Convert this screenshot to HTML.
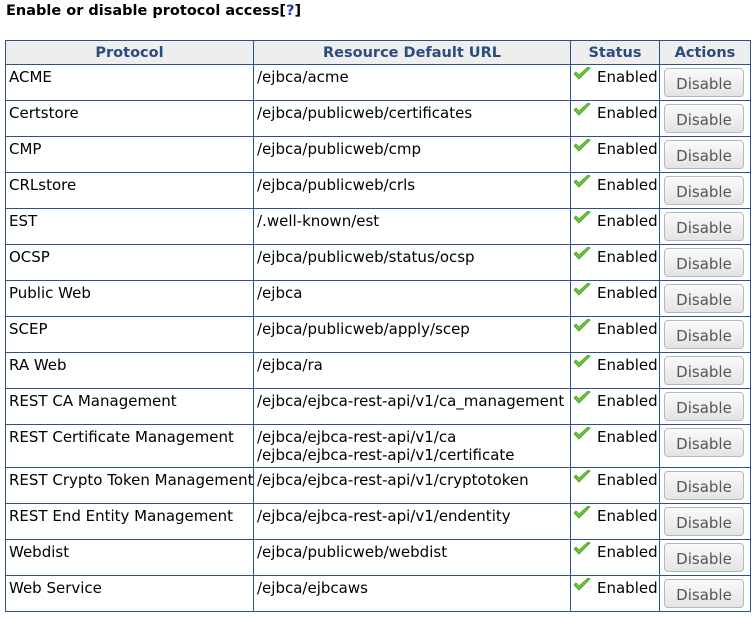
<!DOCTYPE html>
<html><head><meta charset="utf-8"><style>
body{margin:0;background:#fff;font-family:"DejaVu Sans",Verdana,sans-serif;font-size:15px;color:#000;}
h3{position:absolute;left:6px;top:3px;margin:0;font-size:14.5px;font-weight:bold;}
h3 a{color:#1a3aa0;text-decoration:none;}
table{position:absolute;left:5px;top:40px;border-collapse:collapse;table-layout:fixed;width:745px;}
td,th{border:1px solid #2f5089;padding:0 0 0 3px;vertical-align:top;overflow:hidden;white-space:nowrap;line-height:18px;}
th{background:#eeeeee;color:#2b4b7e;font-weight:bold;height:20px;padding:3px 0 0 0;text-align:center;font-size:14.5px;}
td{height:32px;padding-top:3px;}
td.s{padding-left:2px;}
.chk{display:inline-block;width:18px;height:14px;vertical-align:top;margin-top:-1px;margin-right:6px;}
.btn{display:block;margin:3px 0 0 3px;width:80px;height:29px;box-sizing:border-box;border:1px solid #b8b8b8;border-radius:4px;background:linear-gradient(#fafafa,#e4e4e4);color:#555;text-align:center;line-height:30px;font-size:15px;}
td.a{padding:0 0 0 1px;}
tr.tall td{height:39px;}
</style></head><body>
<h3>Enable or disable protocol access[<a>?</a>]</h3>
<table>
<colgroup><col style="width:248px"><col style="width:317px"><col style="width:89px"><col style="width:91px"></colgroup>
<tr><th>Protocol</th><th>Resource Default URL</th><th>Status</th><th>Actions</th></tr>
<tr><td>ACME</td><td>/ejbca/acme</td><td class="s"><svg class="chk" viewBox="0 0 18 14"><path d="M1 7 L6 12 L17 1 L15 0 L6 8 L3 5 Z" fill="#6cc83a" stroke="#4a9a26" stroke-width="0.8"/></svg>Enabled</td><td class="a"><span class="btn">Disable</span></td></tr>
<tr><td>Certstore</td><td>/ejbca/publicweb/certificates</td><td class="s"><svg class="chk" viewBox="0 0 18 14"><path d="M1 7 L6 12 L17 1 L15 0 L6 8 L3 5 Z" fill="#6cc83a" stroke="#4a9a26" stroke-width="0.8"/></svg>Enabled</td><td class="a"><span class="btn">Disable</span></td></tr>
<tr><td>CMP</td><td>/ejbca/publicweb/cmp</td><td class="s"><svg class="chk" viewBox="0 0 18 14"><path d="M1 7 L6 12 L17 1 L15 0 L6 8 L3 5 Z" fill="#6cc83a" stroke="#4a9a26" stroke-width="0.8"/></svg>Enabled</td><td class="a"><span class="btn">Disable</span></td></tr>
<tr><td>CRLstore</td><td>/ejbca/publicweb/crls</td><td class="s"><svg class="chk" viewBox="0 0 18 14"><path d="M1 7 L6 12 L17 1 L15 0 L6 8 L3 5 Z" fill="#6cc83a" stroke="#4a9a26" stroke-width="0.8"/></svg>Enabled</td><td class="a"><span class="btn">Disable</span></td></tr>
<tr><td>EST</td><td>/.well-known/est</td><td class="s"><svg class="chk" viewBox="0 0 18 14"><path d="M1 7 L6 12 L17 1 L15 0 L6 8 L3 5 Z" fill="#6cc83a" stroke="#4a9a26" stroke-width="0.8"/></svg>Enabled</td><td class="a"><span class="btn">Disable</span></td></tr>
<tr><td>OCSP</td><td>/ejbca/publicweb/status/ocsp</td><td class="s"><svg class="chk" viewBox="0 0 18 14"><path d="M1 7 L6 12 L17 1 L15 0 L6 8 L3 5 Z" fill="#6cc83a" stroke="#4a9a26" stroke-width="0.8"/></svg>Enabled</td><td class="a"><span class="btn">Disable</span></td></tr>
<tr><td>Public Web</td><td>/ejbca</td><td class="s"><svg class="chk" viewBox="0 0 18 14"><path d="M1 7 L6 12 L17 1 L15 0 L6 8 L3 5 Z" fill="#6cc83a" stroke="#4a9a26" stroke-width="0.8"/></svg>Enabled</td><td class="a"><span class="btn">Disable</span></td></tr>
<tr><td>SCEP</td><td>/ejbca/publicweb/apply/scep</td><td class="s"><svg class="chk" viewBox="0 0 18 14"><path d="M1 7 L6 12 L17 1 L15 0 L6 8 L3 5 Z" fill="#6cc83a" stroke="#4a9a26" stroke-width="0.8"/></svg>Enabled</td><td class="a"><span class="btn">Disable</span></td></tr>
<tr><td>RA Web</td><td>/ejbca/ra</td><td class="s"><svg class="chk" viewBox="0 0 18 14"><path d="M1 7 L6 12 L17 1 L15 0 L6 8 L3 5 Z" fill="#6cc83a" stroke="#4a9a26" stroke-width="0.8"/></svg>Enabled</td><td class="a"><span class="btn">Disable</span></td></tr>
<tr><td>REST CA Management</td><td>/ejbca/ejbca-rest-api/v1/ca_management</td><td class="s"><svg class="chk" viewBox="0 0 18 14"><path d="M1 7 L6 12 L17 1 L15 0 L6 8 L3 5 Z" fill="#6cc83a" stroke="#4a9a26" stroke-width="0.8"/></svg>Enabled</td><td class="a"><span class="btn">Disable</span></td></tr>
<tr class="tall"><td>REST Certificate Management</td><td>/ejbca/ejbca-rest-api/v1/ca<br>/ejbca/ejbca-rest-api/v1/certificate</td><td class="s"><svg class="chk" viewBox="0 0 18 14"><path d="M1 7 L6 12 L17 1 L15 0 L6 8 L3 5 Z" fill="#6cc83a" stroke="#4a9a26" stroke-width="0.8"/></svg>Enabled</td><td class="a"><span class="btn">Disable</span></td></tr>
<tr><td>REST Crypto Token Management</td><td>/ejbca/ejbca-rest-api/v1/cryptotoken</td><td class="s"><svg class="chk" viewBox="0 0 18 14"><path d="M1 7 L6 12 L17 1 L15 0 L6 8 L3 5 Z" fill="#6cc83a" stroke="#4a9a26" stroke-width="0.8"/></svg>Enabled</td><td class="a"><span class="btn">Disable</span></td></tr>
<tr><td>REST End Entity Management</td><td>/ejbca/ejbca-rest-api/v1/endentity</td><td class="s"><svg class="chk" viewBox="0 0 18 14"><path d="M1 7 L6 12 L17 1 L15 0 L6 8 L3 5 Z" fill="#6cc83a" stroke="#4a9a26" stroke-width="0.8"/></svg>Enabled</td><td class="a"><span class="btn">Disable</span></td></tr>
<tr><td>Webdist</td><td>/ejbca/publicweb/webdist</td><td class="s"><svg class="chk" viewBox="0 0 18 14"><path d="M1 7 L6 12 L17 1 L15 0 L6 8 L3 5 Z" fill="#6cc83a" stroke="#4a9a26" stroke-width="0.8"/></svg>Enabled</td><td class="a"><span class="btn">Disable</span></td></tr>
<tr><td>Web Service</td><td>/ejbca/ejbcaws</td><td class="s"><svg class="chk" viewBox="0 0 18 14"><path d="M1 7 L6 12 L17 1 L15 0 L6 8 L3 5 Z" fill="#6cc83a" stroke="#4a9a26" stroke-width="0.8"/></svg>Enabled</td><td class="a"><span class="btn">Disable</span></td></tr>
</table>
</body></html>
